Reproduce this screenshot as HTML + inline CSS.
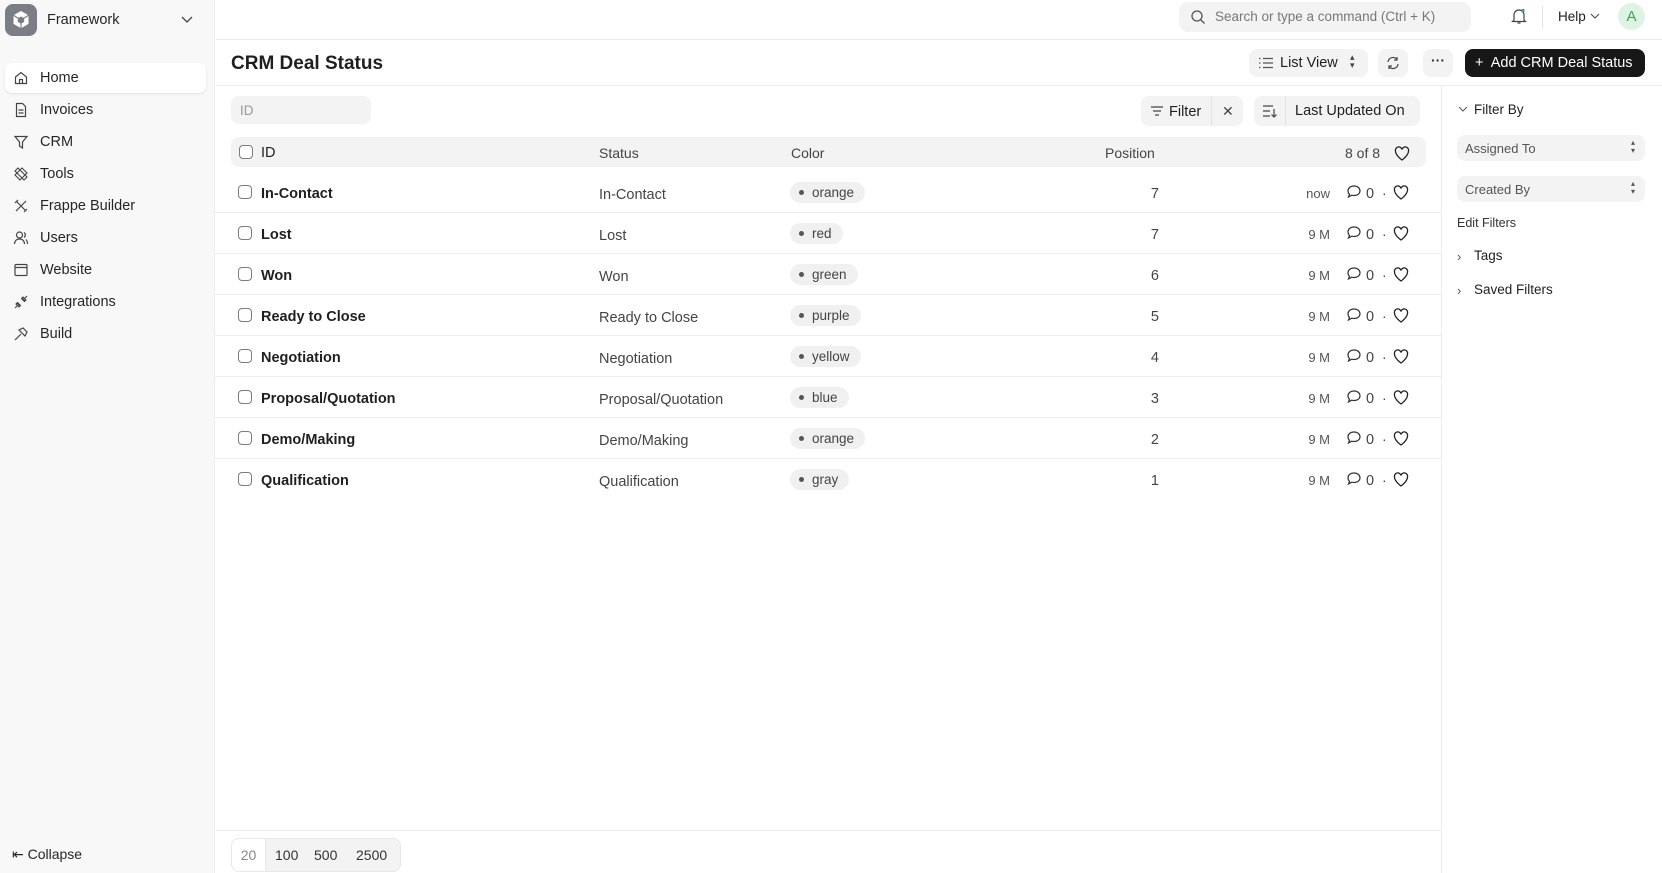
<!DOCTYPE html>
<html><head><meta charset="utf-8"><style>
*{box-sizing:border-box;margin:0;padding:0}
body{width:1662px;height:873px;overflow:hidden;font-family:"Liberation Sans",sans-serif;color:#1f1f1f;background:#fff;position:relative;font-size:14px}
.a{position:absolute}
.sb{left:0;top:0;width:215px;height:873px;background:#f8f8f8;border-right:1px solid #ececec}
.nav{left:16px;width:190px;height:30px;display:flex;align-items:center;font-size:14.5px;color:#262626}
.nav svg{position:absolute;left:4px;width:16px;height:16px}
.nav span{position:absolute;left:24px}
.btn{background:#f3f3f3;border-radius:8px}
.row{left:215px;width:1226px;height:41px;border-bottom:1px solid #ededed}
.row .cb{position:absolute;left:23px;top:13px;width:14px;height:14px;border:1.3px solid #7c7c7c;border-radius:4px}
.row .id{position:absolute;left:46px;top:14px;font-weight:bold;font-size:14.5px}
.row .st{position:absolute;left:384px;top:15px;color:#444;font-size:14.5px}
.row .pill{position:absolute;left:575px;top:10px;height:21px;border-radius:11px;background:#f0f0f0;padding:0 11px 0 22px;line-height:21px;color:#444;font-size:13.5px}
.row .pill:before{content:"";position:absolute;left:9px;top:8px;width:5px;height:5px;border-radius:50%;background:#555}
.row .pos{position:absolute;right:282px;top:14px;color:#444;font-size:14.5px}
.row .tm{position:absolute;right:111px;top:14px;color:#555;font-size:13px}
.row .cm{position:absolute;left:1131px;top:12px;width:16px;height:16px}
.row .z{position:absolute;left:1151px;top:14px;color:#444;font-size:14.5px}
.row .dt{position:absolute;left:1167px;top:13px;color:#444}
.row .ht{position:absolute;left:1178px;top:13px;width:16px;height:15px}
.side{left:1457px;font-size:13px}
</style></head><body>
<div class="a sb">
 <div class="a" style="left:5px;top:4px;width:32px;height:32px;border-radius:8px;background:#7b7e86">
  <svg width="32" height="32" viewBox="0 0 32 32"><path d="M16 7l7.5 4.3v8.6L16 24.2 8.5 19.9v-8.6z" fill="#fff"/><path d="M16 12.5l3.2 1.8v3.6L16 19.7l-3.2-1.8v-3.6z" fill="#7b7e86"/><path d="M16 16l7.5-4.7M16 16v8.2M16 16l-7.5-4.7" stroke="#7b7e86" stroke-width="1.2"/></svg>
 </div>
 <div class="a" style="left:47px;top:12px;font-size:14.5px;color:#262626">Framework</div>
 <svg class="a" style="left:180px;top:14px" width="14" height="12" viewBox="0 0 14 12"><path d="M2 3l5 5 5-5" stroke="#444" fill="none" stroke-width="1.3"/></svg>
 <div class="a nav" style="top:63px;left:5px;width:201px;background:#fff;border-radius:7px;box-shadow:0 1px 2px rgba(0,0,0,.1)"><svg style="left:8px" viewBox="0 0 16 16"><path d="M2.5 7L8 2.5 13.5 7v6.5h-11z M6.5 13.5v-4h3v4" stroke="#444" fill="none" stroke-width="1.2"/></svg><span style="left:35px">Home</span></div>
 <div class="a nav" style="top:95px;left:9px"><svg viewBox="0 0 16 16"><path d="M3.5 1.5h6l3 3v10h-9z M5.5 8h5M5.5 11h5" stroke="#444" fill="none" stroke-width="1.2"/></svg><span style="left:31px">Invoices</span></div>
 <div class="a nav" style="top:127px;left:9px"><svg viewBox="0 0 16 16"><path d="M2 2.5h12l-4.5 5.5v6l-3-2v-4z" stroke="#444" fill="none" stroke-width="1.2"/></svg><span style="left:31px">CRM</span></div>
 <div class="a nav" style="top:159px;left:9px"><svg viewBox="0 0 16 16"><path d="M2 5l3-3 9 9-3 3z M9 2l5 5-7 7-5-5z" stroke="#444" fill="none" stroke-width="1.1"/></svg><span style="left:31px">Tools</span></div>
 <div class="a nav" style="top:191px;left:9px"><svg viewBox="0 0 16 16"><path d="M3 3l10 10M13 3L3 13M2 5l3-3M11 14l3-3" stroke="#444" fill="none" stroke-width="1.2"/></svg><span style="left:31px">Frappe Builder</span></div>
 <div class="a nav" style="top:223px;left:9px"><svg viewBox="0 0 16 16"><circle cx="6.5" cy="5" r="3" stroke="#444" fill="none" stroke-width="1.2"/><path d="M1.5 14c0-3 2-5 5-5s5 2 5 5M11 2.5a3 3 0 010 5M13 9.5c1 1 1.5 2.5 1.5 4.5" stroke="#444" fill="none" stroke-width="1.2"/></svg><span style="left:31px">Users</span></div>
 <div class="a nav" style="top:255px;left:9px"><svg viewBox="0 0 16 16"><rect x="2" y="2.5" width="12" height="11" rx="1" stroke="#444" fill="none" stroke-width="1.2"/><path d="M2 5.5h12" stroke="#444" stroke-width="1.2"/></svg><span style="left:31px">Website</span></div>
 <div class="a nav" style="top:287px;left:9px"><svg viewBox="0 0 16 16"><path d="M2 14l3-3M14 2l-3 3M4 9l3 3M9 4l3 3M4.5 8.5l3 3-1.5 1.5-3-3zM11.5 7.5l-3-3 1.5-1.5 3 3z" stroke="#444" fill="none" stroke-width="1.1"/></svg><span style="left:31px">Integrations</span></div>
 <div class="a nav" style="top:319px;left:9px"><svg viewBox="0 0 16 16"><path d="M2 14l6-6M6 4l4-2 4 4-2 4z" stroke="#444" fill="none" stroke-width="1.2"/></svg><span style="left:31px">Build</span></div>
 <div class="a" style="left:12px;top:846px;font-size:14px;color:#262626">⇤ Collapse</div>
</div>
<div class="a" style="left:216px;top:39px;width:1446px;border-top:1px solid #ececec"></div>
<div class="a btn" style="left:1179px;top:2px;width:292px;height:30px;border-radius:9px"></div>
<svg class="a" style="left:1190px;top:9px" width="16" height="16" viewBox="0 0 16 16"><circle cx="7" cy="7" r="5" stroke="#555" fill="none" stroke-width="1.3"/><path d="M11 11l3.5 3.5" stroke="#555" stroke-width="1.3"/></svg>
<div class="a" style="left:1215px;top:9px;color:#777;font-size:13.5px">Search or type a command (Ctrl + K)</div>
<svg class="a" style="left:1510px;top:7px" width="18" height="18" viewBox="0 0 18 18"><path d="M4 13V8a5 5 0 0110 0v5l1.5 1.5h-13zM7.5 16h3" stroke="#444" fill="none" stroke-width="1.2"/><circle cx="13" cy="3.5" r="1.6" fill="#3aa35b"/></svg>
<div class="a" style="left:1542px;top:5px;height:24px;border-left:1px solid #e5e5e5"></div>
<div class="a" style="left:1558px;top:9px;font-size:13.5px">Help</div>
<svg class="a" style="left:1590px;top:12px" width="10" height="8" viewBox="0 0 10 8"><path d="M1 2l4 4 4-4" stroke="#444" fill="none"/></svg>
<div class="a" style="left:1618px;top:3px;width:27px;height:27px;border-radius:50%;background:#def3e4;color:#3aa35b;text-align:center;line-height:27px;font-size:15px">A</div>

<div class="a" style="left:231px;top:53px;font-size:19px;font-weight:bold">CRM Deal Status</div>
<div class="a btn" style="left:1249px;top:49px;width:119px;height:28px"></div>
<svg class="a" style="left:1259px;top:57px" width="14" height="12" viewBox="0 0 14 12"><path d="M0 1.5h1.5M0 6h1.5M0 10.5h1.5M4 1.5h10M4 6h10M4 10.5h10" stroke="#555" stroke-width="1.2"/></svg>
<div class="a" style="left:1280px;top:55px;font-size:14.5px">List View</div>
<div class="a" style="left:1350px;top:53px;font-size:9px;color:#444;line-height:8px">▴<br>▾</div>
<div class="a btn" style="left:1378px;top:49px;width:30px;height:28px"></div>
<svg class="a" style="left:1386px;top:56px" width="14" height="14" viewBox="0 0 14 14"><path d="M2 6a5 5 0 019-2.5M12 8a5 5 0 01-9 2.5M11 1v3h-3M3 13v-3h3" stroke="#444" fill="none" stroke-width="1.2"/></svg>
<div class="a btn" style="left:1423px;top:49px;width:30px;height:28px;text-align:center;line-height:22px;font-weight:bold;color:#333">···</div>
<div class="a" style="left:1465px;top:49px;width:180px;height:28px;background:#171717;border-radius:8px;color:#fff;font-size:14.5px;line-height:28px;padding-left:10px">+&nbsp; Add CRM Deal Status</div>
<div class="a" style="left:216px;top:85px;width:1446px;border-top:1px solid #ececec"></div>
<div class="a" style="left:1441px;top:85px;height:788px;border-left:1px solid #ececec"></div>

<div class="a btn" style="left:231px;top:96px;width:140px;height:28px;color:#999;padding:7px 9px;font-size:13.5px">ID</div>
<div class="a btn" style="left:1141px;top:96px;width:102px;height:30px"></div>
<div class="a" style="left:1211px;top:96px;height:30px;border-left:1px solid #e2e2e2"></div>
<svg class="a" style="left:1150px;top:105px" width="14" height="12" viewBox="0 0 14 12"><path d="M1 2h12M3 6h8M5 10h4" stroke="#444" stroke-width="1.2"/></svg>
<div class="a" style="left:1169px;top:104px;font-size:14.5px">Filter</div>
<div class="a" style="left:1222px;top:103px;font-size:14px;color:#444">✕</div>
<div class="a btn" style="left:1254px;top:96px;width:166px;height:30px"></div>
<div class="a" style="left:1285px;top:96px;height:30px;border-left:1px solid #e2e2e2"></div>
<svg class="a" style="left:1262px;top:104px" width="16" height="14" viewBox="0 0 16 14"><path d="M1 2h10M1 7h7M1 12h7M12 5v8M9.5 10.5L12 13l2.5-2.5" stroke="#444" fill="none" stroke-width="1.2"/></svg>
<div class="a" style="left:1295px;top:103px;font-size:14.5px">Last Updated On</div>

<div class="a btn" style="left:231px;top:137px;width:1195px;height:30px"></div>
<div class="a" style="left:239px;top:145px;width:14px;height:14px;border:1.3px solid #7c7c7c;border-radius:4px;background:#fff"></div>
<div class="a" style="left:261px;top:145px;font-size:14.5px">ID</div>
<div class="a" style="left:599px;top:145px;font-size:14px;color:#444">Status</div>
<div class="a" style="left:791px;top:145px;font-size:14px;color:#444">Color</div>
<div class="a" style="left:1105px;top:145px;font-size:14px;color:#444">Position</div>
<div class="a" style="left:1345px;top:145px;font-size:14px;color:#444">8 of 8</div>
<svg class="a" style="left:1394px;top:146px" width="16" height="15" viewBox="0 0 16 15"><path d="M8 14S1.5 9.5 1.5 5A3.3 3.3 0 018 3.5 3.3 3.3 0 0114.5 5C14.5 9.5 8 14 8 14z" stroke="#222" fill="none" stroke-width="1.3"/></svg>

<div class="a" style="left:0;top:172px">
<div class="a row" style="top:0"><div class="cb"></div><div class="id">In-Contact</div><div class="st">In-Contact</div><div class="pill">orange</div><div class="pos">7</div><div class="tm">now</div><svg class="cm" viewBox="0 0 16 16"><path d="M8 2c3.5 0 6 2 6 4.8S11.5 11.5 8 11.5c-.8 0-1.5-.1-2.2-.3L2.5 13l1-2.6C2.5 9.5 2 8.3 2 6.8 2 4 4.5 2 8 2z" stroke="#333" fill="none" stroke-width="1.2"/></svg><div class="z">0</div><div class="dt">·</div><svg class="ht" viewBox="0 0 16 15"><path d="M8 14S1.5 9.5 1.5 5A3.3 3.3 0 018 3.5 3.3 3.3 0 0114.5 5C14.5 9.5 8 14 8 14z" stroke="#222" fill="none" stroke-width="1.3"/></svg></div>
<div class="a row" style="top:41px"><div class="cb"></div><div class="id">Lost</div><div class="st">Lost</div><div class="pill">red</div><div class="pos">7</div><div class="tm">9 M</div><svg class="cm" viewBox="0 0 16 16"><path d="M8 2c3.5 0 6 2 6 4.8S11.5 11.5 8 11.5c-.8 0-1.5-.1-2.2-.3L2.5 13l1-2.6C2.5 9.5 2 8.3 2 6.8 2 4 4.5 2 8 2z" stroke="#333" fill="none" stroke-width="1.2"/></svg><div class="z">0</div><div class="dt">·</div><svg class="ht" viewBox="0 0 16 15"><path d="M8 14S1.5 9.5 1.5 5A3.3 3.3 0 018 3.5 3.3 3.3 0 0114.5 5C14.5 9.5 8 14 8 14z" stroke="#222" fill="none" stroke-width="1.3"/></svg></div>
<div class="a row" style="top:82px"><div class="cb"></div><div class="id">Won</div><div class="st">Won</div><div class="pill">green</div><div class="pos">6</div><div class="tm">9 M</div><svg class="cm" viewBox="0 0 16 16"><path d="M8 2c3.5 0 6 2 6 4.8S11.5 11.5 8 11.5c-.8 0-1.5-.1-2.2-.3L2.5 13l1-2.6C2.5 9.5 2 8.3 2 6.8 2 4 4.5 2 8 2z" stroke="#333" fill="none" stroke-width="1.2"/></svg><div class="z">0</div><div class="dt">·</div><svg class="ht" viewBox="0 0 16 15"><path d="M8 14S1.5 9.5 1.5 5A3.3 3.3 0 018 3.5 3.3 3.3 0 0114.5 5C14.5 9.5 8 14 8 14z" stroke="#222" fill="none" stroke-width="1.3"/></svg></div>
<div class="a row" style="top:123px"><div class="cb"></div><div class="id">Ready to Close</div><div class="st">Ready to Close</div><div class="pill">purple</div><div class="pos">5</div><div class="tm">9 M</div><svg class="cm" viewBox="0 0 16 16"><path d="M8 2c3.5 0 6 2 6 4.8S11.5 11.5 8 11.5c-.8 0-1.5-.1-2.2-.3L2.5 13l1-2.6C2.5 9.5 2 8.3 2 6.8 2 4 4.5 2 8 2z" stroke="#333" fill="none" stroke-width="1.2"/></svg><div class="z">0</div><div class="dt">·</div><svg class="ht" viewBox="0 0 16 15"><path d="M8 14S1.5 9.5 1.5 5A3.3 3.3 0 018 3.5 3.3 3.3 0 0114.5 5C14.5 9.5 8 14 8 14z" stroke="#222" fill="none" stroke-width="1.3"/></svg></div>
<div class="a row" style="top:164px"><div class="cb"></div><div class="id">Negotiation</div><div class="st">Negotiation</div><div class="pill">yellow</div><div class="pos">4</div><div class="tm">9 M</div><svg class="cm" viewBox="0 0 16 16"><path d="M8 2c3.5 0 6 2 6 4.8S11.5 11.5 8 11.5c-.8 0-1.5-.1-2.2-.3L2.5 13l1-2.6C2.5 9.5 2 8.3 2 6.8 2 4 4.5 2 8 2z" stroke="#333" fill="none" stroke-width="1.2"/></svg><div class="z">0</div><div class="dt">·</div><svg class="ht" viewBox="0 0 16 15"><path d="M8 14S1.5 9.5 1.5 5A3.3 3.3 0 018 3.5 3.3 3.3 0 0114.5 5C14.5 9.5 8 14 8 14z" stroke="#222" fill="none" stroke-width="1.3"/></svg></div>
<div class="a row" style="top:205px"><div class="cb"></div><div class="id">Proposal/Quotation</div><div class="st">Proposal/Quotation</div><div class="pill">blue</div><div class="pos">3</div><div class="tm">9 M</div><svg class="cm" viewBox="0 0 16 16"><path d="M8 2c3.5 0 6 2 6 4.8S11.5 11.5 8 11.5c-.8 0-1.5-.1-2.2-.3L2.5 13l1-2.6C2.5 9.5 2 8.3 2 6.8 2 4 4.5 2 8 2z" stroke="#333" fill="none" stroke-width="1.2"/></svg><div class="z">0</div><div class="dt">·</div><svg class="ht" viewBox="0 0 16 15"><path d="M8 14S1.5 9.5 1.5 5A3.3 3.3 0 018 3.5 3.3 3.3 0 0114.5 5C14.5 9.5 8 14 8 14z" stroke="#222" fill="none" stroke-width="1.3"/></svg></div>
<div class="a row" style="top:246px"><div class="cb"></div><div class="id">Demo/Making</div><div class="st">Demo/Making</div><div class="pill">orange</div><div class="pos">2</div><div class="tm">9 M</div><svg class="cm" viewBox="0 0 16 16"><path d="M8 2c3.5 0 6 2 6 4.8S11.5 11.5 8 11.5c-.8 0-1.5-.1-2.2-.3L2.5 13l1-2.6C2.5 9.5 2 8.3 2 6.8 2 4 4.5 2 8 2z" stroke="#333" fill="none" stroke-width="1.2"/></svg><div class="z">0</div><div class="dt">·</div><svg class="ht" viewBox="0 0 16 15"><path d="M8 14S1.5 9.5 1.5 5A3.3 3.3 0 018 3.5 3.3 3.3 0 0114.5 5C14.5 9.5 8 14 8 14z" stroke="#222" fill="none" stroke-width="1.3"/></svg></div>
<div class="a row" style="top:287px;border-bottom:none"><div class="cb"></div><div class="id">Qualification</div><div class="st">Qualification</div><div class="pill">gray</div><div class="pos">1</div><div class="tm">9 M</div><svg class="cm" viewBox="0 0 16 16"><path d="M8 2c3.5 0 6 2 6 4.8S11.5 11.5 8 11.5c-.8 0-1.5-.1-2.2-.3L2.5 13l1-2.6C2.5 9.5 2 8.3 2 6.8 2 4 4.5 2 8 2z" stroke="#333" fill="none" stroke-width="1.2"/></svg><div class="z">0</div><div class="dt">·</div><svg class="ht" viewBox="0 0 16 15"><path d="M8 14S1.5 9.5 1.5 5A3.3 3.3 0 018 3.5 3.3 3.3 0 0114.5 5C14.5 9.5 8 14 8 14z" stroke="#222" fill="none" stroke-width="1.3"/></svg></div>
</div>

<div class="a" style="left:216px;top:830px;width:1225px;border-top:1px solid #ececec"></div>
<div class="a" style="left:231px;top:838px;width:170px;height:34px;border:1px solid #e8e8e8;border-radius:8px;background:#f3f3f3;overflow:hidden">
 <div class="a" style="left:0;top:0;width:34px;height:34px;background:#fff;border-right:1px solid #e8e8e8;color:#888;text-align:center;line-height:32px;font-size:14px">20</div>
 <div class="a" style="left:43px;top:8px;font-size:14px;color:#333">100</div>
 <div class="a" style="left:82px;top:8px;font-size:14px;color:#333">500</div>
 <div class="a" style="left:124px;top:8px;font-size:14px;color:#333">2500</div>
</div>

<svg class="a" style="left:1458px;top:105px" width="10" height="8" viewBox="0 0 10 8"><path d="M1 2l4 4 4-4" stroke="#555" fill="none"/></svg>
<div class="a side" style="left:1474px;top:102px;font-size:13.5px">Filter By</div>
<div class="a btn side" style="top:135px;width:188px;height:26px;padding:6px 8px;color:#555">Assigned To<span style="position:absolute;right:10px;top:4px;font-size:8px;line-height:8px">▴<br>▾</span></div>
<div class="a btn side" style="top:176px;width:188px;height:26px;padding:6px 8px;color:#555">Created By<span style="position:absolute;right:10px;top:4px;font-size:8px;line-height:8px">▴<br>▾</span></div>
<div class="a side" style="top:216px;font-size:12.5px;color:#333">Edit Filters</div>
<div class="a side" style="top:249px;color:#555">›</div>
<div class="a side" style="left:1474px;top:248px;font-size:13.5px">Tags</div>
<div class="a side" style="top:283px;color:#555">›</div>
<div class="a side" style="left:1474px;top:282px;font-size:13.5px">Saved Filters</div>
</body></html>
